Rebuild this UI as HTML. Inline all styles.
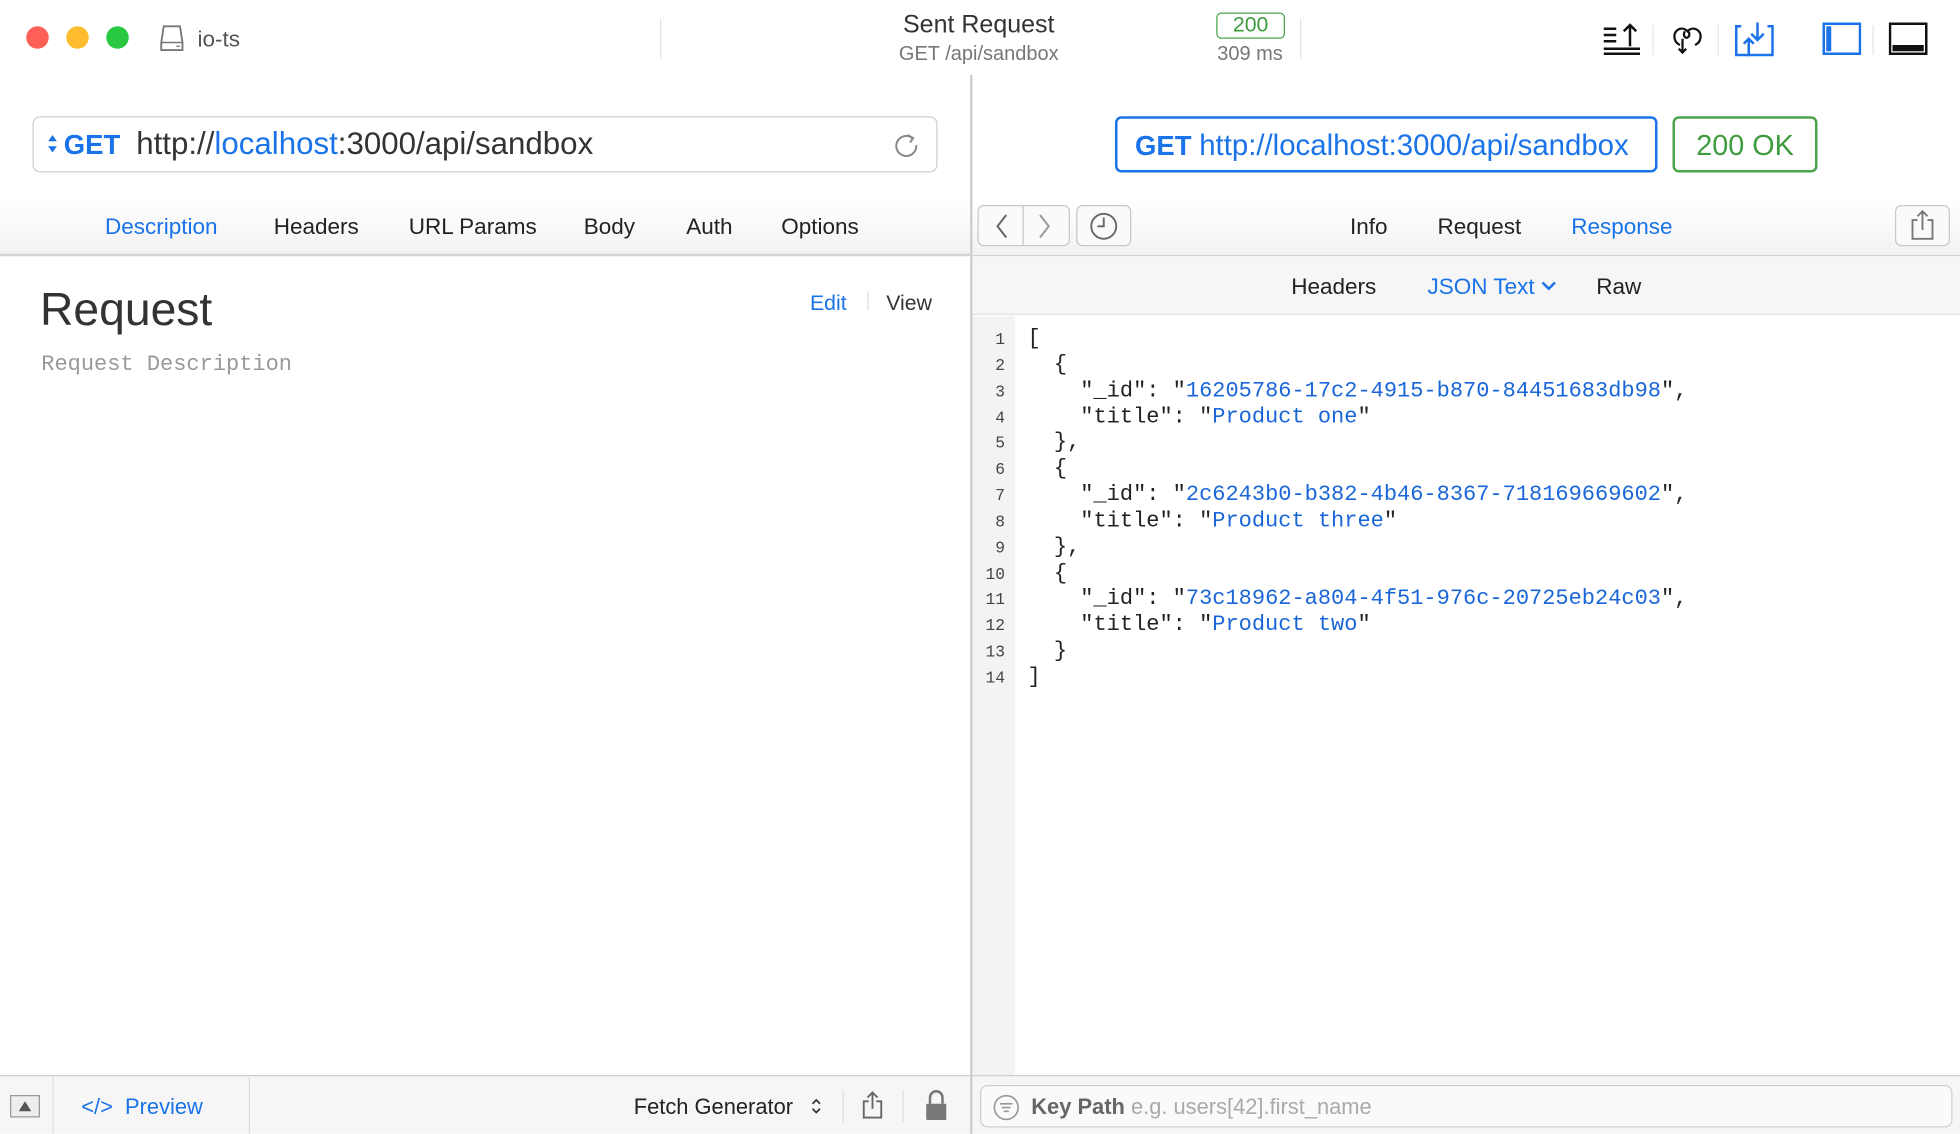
<!DOCTYPE html>
<html><head><meta charset="utf-8"><style>
*{box-sizing:border-box;margin:0;padding:0}
html,body{width:1960px;height:1134px;overflow:hidden;background:#fff}
#w{position:absolute;left:0;top:0;width:1568px;height:907px;transform:scale(1.25);transform-origin:0 0;font-family:"Liberation Sans",sans-serif;color:#222}
.a{position:absolute;white-space:nowrap}
.blue{color:#1a73e8}
.tab{position:absolute;top:171px;font-size:18px}
code,.m{font-family:"Liberation Mono",monospace}
.ln{position:absolute;left:777px;width:27px;text-align:right;font-family:"Liberation Mono",monospace;font-size:13px;color:#444}
.cl{position:absolute;left:822px;font-family:"Liberation Mono",monospace;font-size:17.6px;color:#222;white-space:pre}
.s{color:#1a66d9}
</style></head><body><div id="w">
<!-- title bar -->
<div class="a" style="left:21px;top:21px;width:18px;height:18px;border-radius:50%;background:#fe5f57"></div>
<div class="a" style="left:53px;top:21px;width:18px;height:18px;border-radius:50%;background:#febc2e"></div>
<div class="a" style="left:85px;top:21px;width:18px;height:18px;border-radius:50%;background:#28c840"></div>
<svg class="a" style="left:127px;top:19px" width="22" height="24" viewBox="0 0 22 24"><path d="M4 2h13l2 13v6H2v-6z" fill="none" stroke="#777" stroke-width="1.5"/><line x1="2" y1="15" x2="19" y2="15" stroke="#777" stroke-width="1.2"/><line x1="14" y1="18" x2="17" y2="18" stroke="#777"/></svg>
<div class="a" style="left:158px;top:21px;font-size:18px;color:#555">io-ts</div>
<div class="a" style="left:528px;top:15px;width:1px;height:32px;background:#e4e4e4"></div>
<div class="a" style="left:683px;top:9px;width:200px;text-align:center;font-size:20px;color:#333">Sent Request</div>
<div class="a" style="left:683px;top:35px;width:200px;text-align:center;font-size:16px;color:#777">GET /api/sandbox</div>
<div class="a" style="left:973px;top:10px;width:55px;height:21px;border:1.5px solid #4ba34b;border-radius:4px;color:#3e9b3e;font-size:17px;text-align:center;line-height:18px">200</div>
<div class="a" style="left:960px;top:35px;width:80px;text-align:center;font-size:16px;color:#777">309 ms</div>
<div class="a" style="left:1040px;top:15px;width:1px;height:32px;background:#e4e4e4"></div>
<svg class="a" style="left:1282px;top:17px" width="32" height="28" viewBox="0 0 32 28"><g stroke="#111" stroke-width="2" fill="none"><path d="M1 6h10M1 11h10M1 16h10M1 22h29M1 26h29M22 20V3M17 8l5-5 5 5"/></g></svg>
<div class="a" style="left:1322px;top:20px;width:1px;height:24px;background:#e4e4e4"></div>
<svg class="a" style="left:1336px;top:19px" width="28" height="26" viewBox="0 0 28 26"><g stroke="#111" stroke-width="1.8" fill="none"><path d="M8 17C3 15 2 8 6 5c3-2 6-1 8 1 2-2 5-3 8-1 4 3 3 10-2 12"/><path d="M12 6c-2 3 0 6 2 5s2-4 0-5M10 12v11M7 20l3 3 3-3"/></g></svg>
<div class="a" style="left:1374px;top:20px;width:1px;height:24px;background:#e4e4e4"></div>
<svg class="a" style="left:1387px;top:17px" width="33" height="30" viewBox="0 0 33 30"><g stroke="#1a73e8" stroke-width="2" fill="none"><path d="M6 4H2v23h29V4h-4"/><path d="M19 1v14M14 10l5 5 5-5M12 28V14M8 18l4-4 4 4"/></g></svg>
<svg class="a" style="left:1458px;top:18px" width="31" height="26" viewBox="0 0 31 26"><rect x="1" y="1" width="29" height="24" fill="none" stroke="#1a73e8" stroke-width="2"/><rect x="3" y="3" width="4" height="20" fill="#1a73e8"/></svg>
<div class="a" style="left:1498px;top:20px;width:1px;height:24px;background:#e4e4e4"></div>
<svg class="a" style="left:1511px;top:18px" width="31" height="26" viewBox="0 0 31 26"><rect x="1" y="1" width="29" height="24" fill="none" stroke="#111" stroke-width="2"/><rect x="3" y="18" width="25" height="5" fill="#111"/></svg>

<!-- left pane -->
<div class="a" style="left:26px;top:93px;width:724px;height:45px;border:1px solid #cfcfcf;border-radius:6px"></div>
<svg class="a" style="left:38px;top:107px" width="8" height="16" viewBox="0 0 8 16"><path d="M4 1l3.5 5h-7zM4 15l3.5-5h-7z" fill="#1a73e8"/></svg>
<div class="a blue" style="left:51px;top:103px;font-size:22px;font-weight:bold">GET</div>
<div class="a" style="left:109px;top:101px;font-size:25px;color:#333">http://<span class="blue">localhost</span>:3000/api/sandbox</div>
<svg class="a" style="left:713px;top:104px" width="24" height="24" viewBox="0 0 24 24"><path d="M17 6.5A8 8 0 1 0 20 12" fill="none" stroke="#888" stroke-width="1.6"/><path d="M13 4l4.5 2.5L15 10" fill="none" stroke="#888" stroke-width="1.6"/></svg>
<div class="a" style="left:0;top:160px;width:776px;height:44px;background:linear-gradient(#fff,#f2f2f2)"></div>
<div class="a" style="left:0;top:203px;width:1568px;height:2px;background:#d4d4d4"></div>
<div class="tab blue" style="left:84px">Description</div>
<div class="tab" style="left:219px">Headers</div>
<div class="tab" style="left:327px">URL Params</div>
<div class="tab" style="left:467px">Body</div>
<div class="tab" style="left:549px">Auth</div>
<div class="tab" style="left:625px">Options</div>
<div class="a" style="left:32px;top:227px;font-size:37px;color:#333">Request</div>
<div class="a m" style="left:33px;top:282px;font-size:17.6px;color:#999">Request Description</div>
<div class="a blue" style="left:648px;top:233px;font-size:17px">Edit</div>
<div class="a" style="left:694px;top:233px;width:1px;height:15px;background:#ddd"></div>
<div class="a" style="left:709px;top:233px;font-size:17px;color:#333">View</div>
<div class="a" style="left:776px;top:60px;width:1.5px;height:847px;background:#cfcfcf"></div>

<!-- right pane -->
<div class="a" style="left:892px;top:93px;width:434px;height:45px;border:2px solid #1a73e8;border-radius:5px"></div>
<div class="a blue" style="left:908px;top:103px;font-size:22px"><b>GET</b> <span style="font-size:23.5px">http://localhost:3000/api/sandbox</span></div>
<div class="a" style="left:1338px;top:93px;width:116px;height:45px;border:2px solid #4ba34b;border-radius:5px;color:#3e9b3e;font-size:23px;text-align:center;line-height:42px">200 OK</div>
<div class="a" style="left:778px;top:160px;width:790px;height:44px;background:linear-gradient(#fff,#f2f2f2)"></div>
<div class="a" style="left:782px;top:164px;width:74px;height:33px;border:1px solid #c8c8c8;border-radius:5px;background:#fafafa"></div>
<div class="a" style="left:818px;top:164px;width:1px;height:33px;background:#c8c8c8"></div>
<svg class="a" style="left:793px;top:170px" width="55" height="22" viewBox="0 0 55 22"><path d="M12 2L5 11l7 9" fill="none" stroke="#666" stroke-width="1.6"/><path d="M39 2l7 9-7 9" fill="none" stroke="#999" stroke-width="1.6"/></svg>
<div class="a" style="left:861px;top:164px;width:44px;height:33px;border:1px solid #c8c8c8;border-radius:5px;background:#fafafa"></div>
<svg class="a" style="left:871px;top:169px" width="24" height="24" viewBox="0 0 24 24"><circle cx="12" cy="12" r="10" fill="none" stroke="#666" stroke-width="1.5"/><path d="M12 5v7H7" fill="none" stroke="#666" stroke-width="1.5"/></svg>
<div class="tab" style="left:1080px">Info</div>
<div class="tab" style="left:1150px">Request</div>
<div class="tab blue" style="left:1257px">Response</div>
<div class="a" style="left:1516px;top:164px;width:44px;height:33px;border:1px solid #c8c8c8;border-radius:5px;background:#fafafa"></div>
<svg class="a" style="left:1526px;top:167px" width="24" height="26" viewBox="0 0 24 26"><path d="M8 9H4v15h16V9h-4M12 2v15M8 6l4-4 4 4" fill="none" stroke="#777" stroke-width="1.5"/></svg>
<div class="a" style="left:778px;top:205px;width:790px;height:47px;background:#f6f6f6;border-bottom:1.5px solid #e2e2e2"></div>
<div class="a" style="left:1033px;top:219px;font-size:18px">Headers</div>
<div class="a blue" style="left:1142px;top:219px;font-size:18px">JSON Text</div>
<svg class="a" style="left:1232px;top:223px" width="14" height="12" viewBox="0 0 14 12"><path d="M2 3l5 5 5-5" fill="none" stroke="#1a73e8" stroke-width="2"/></svg>
<div class="a" style="left:1277px;top:219px;font-size:18px">Raw</div>
<div class="a" style="left:778px;top:253px;width:34px;height:608px;background:#f3f3f3"></div>
<div class="ln" style="top:264px">1</div><div class="ln" style="top:285px">2</div><div class="ln" style="top:306px">3</div><div class="ln" style="top:327px">4</div><div class="ln" style="top:347px">5</div><div class="ln" style="top:368px">6</div><div class="ln" style="top:389px">7</div><div class="ln" style="top:410px">8</div><div class="ln" style="top:431px">9</div><div class="ln" style="top:452px">10</div><div class="ln" style="top:472px">11</div><div class="ln" style="top:493px">12</div><div class="ln" style="top:514px">13</div><div class="ln" style="top:535px">14</div>
<div class="cl" style="top:261px;line-height:20.85px">[
  {
    "_id": "<span class="s">16205786-17c2-4915-b870-84451683db98</span>",
    "title": "<span class="s">Product one</span>"
  },
  {
    "_id": "<span class="s">2c6243b0-b382-4b46-8367-718169669602</span>",
    "title": "<span class="s">Product three</span>"
  },
  {
    "_id": "<span class="s">73c18962-a804-4f51-976c-20725eb24c03</span>",
    "title": "<span class="s">Product two</span>"
  }
]</div>

<!-- bottom bar -->
<div class="a" style="left:0;top:860px;width:1568px;height:47px;background:#f6f6f6;border-top:1.5px solid #cfcfcf"></div>
<div class="a" style="left:776px;top:860px;width:1.5px;height:47px;background:#cfcfcf"></div>
<div class="a" style="left:8px;top:876px;width:24px;height:18px;border:1px solid #999;background:#eee"></div>
<svg class="a" style="left:13px;top:879px" width="14" height="12" viewBox="0 0 14 12"><path d="M7 2l5 8H2z" fill="#555"/></svg>
<div class="a" style="left:42px;top:862px;width:1px;height:45px;background:#ddd"></div>
<div class="a blue" style="left:65px;top:875px;font-size:17.5px">&lt;/&gt;&nbsp;&nbsp;Preview</div>
<div class="a" style="left:199px;top:862px;width:1px;height:45px;background:#ddd"></div>
<div class="a" style="left:507px;top:875px;font-size:17.5px">Fetch Generator</div>
<svg class="a" style="left:648px;top:877px" width="10" height="16" viewBox="0 0 10 16"><path d="M2 6l3-3 3 3M2 10l3 3 3-3" fill="none" stroke="#333" stroke-width="1.4"/></svg>
<div class="a" style="left:674px;top:872px;width:1px;height:26px;background:#ddd"></div>
<svg class="a" style="left:688px;top:872px" width="20" height="24" viewBox="0 0 20 24"><path d="M7 9H3v13h14V9h-4M10 2v13M6 6l4-4 4 4" fill="none" stroke="#666" stroke-width="1.5"/></svg>
<div class="a" style="left:722px;top:872px;width:1px;height:26px;background:#ddd"></div>
<svg class="a" style="left:739px;top:871px" width="20" height="26" viewBox="0 0 20 26"><path d="M5 12V7a5 5 0 0 1 10 0v5" fill="none" stroke="#777" stroke-width="2"/><rect x="2" y="12" width="16" height="13" rx="1" fill="#777"/></svg>
<div class="a" style="left:784px;top:868px;width:778px;height:34px;border:1.5px solid #cfcfcf;border-radius:6px;background:#fafafa"></div>
<svg class="a" style="left:794px;top:875px" width="22" height="22" viewBox="0 0 22 22"><circle cx="11" cy="11" r="9.5" fill="none" stroke="#999" stroke-width="1.3"/><path d="M6 8h10M7.5 11h7M9 14h4" stroke="#999" stroke-width="1.3"/></svg>
<div class="a" style="left:825px;top:875px;font-size:17.5px;color:#666"><b>Key Path</b> <span style="color:#aaa">e.g. users[42].first_name</span></div>
</div></body></html>
